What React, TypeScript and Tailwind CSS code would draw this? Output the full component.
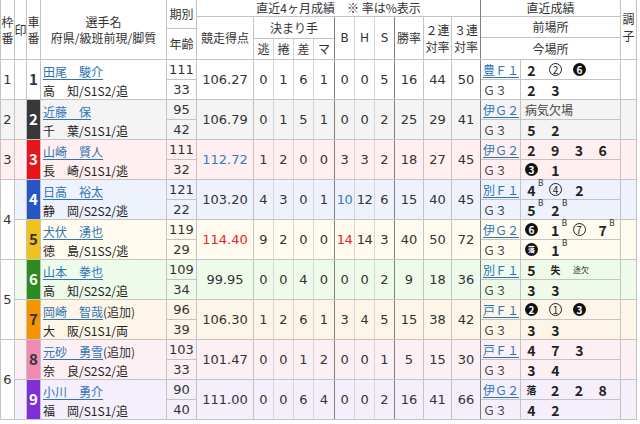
import React from "react";

type Res =
  | { t: "n"; v: string; b?: boolean }
  | { t: "o"; v: string }
  | { t: "f"; v: string; small?: boolean }
  | { t: "txt"; v: string }
  | { t: "s"; v: string; size: "a" | "b" };

type Row = {
  car: string;
  carCls: string;
  bg: string;
  name: string;
  extra?: string;
  pref: string;
  ki: string;
  age: string;
  score: string;
  scoreCls: string;
  k: string[];
  bhs: string[];
  bCls: string;
  rates: string[];
  prev: string;
  r1: Res[];
  r2: Res[];
};

const rows: Row[] = [
  {
    car: "1", carCls: "bg-white text-[#333]", bg: "bg-white",
    name: "田尾　駿介", pref: "高　知/S1S2/追", ki: "111", age: "33",
    score: "106.27", scoreCls: "text-[#333]", k: ["0", "1", "6", "1"], bhs: ["0", "0", "5"], bCls: "text-[#333]",
    rates: ["16", "44", "50"], prev: "豊Ｆ１",
    r1: [{ t: "n", v: "2" }, { t: "o", v: "2" }, { t: "f", v: "6" }],
    r2: [{ t: "n", v: "2" }, { t: "n", v: "3" }],
  },
  {
    car: "2", carCls: "bg-[#383838] text-white", bg: "bg-[#f4f4f4]",
    name: "近藤　保", pref: "千　葉/S1S1/追", ki: "95", age: "42",
    score: "106.79", scoreCls: "text-[#333]", k: ["0", "1", "5", "1"], bhs: ["0", "0", "2"], bCls: "text-[#333]",
    rates: ["25", "29", "41"], prev: "伊Ｇ２",
    r1: [{ t: "txt", v: "病気欠場" }],
    r2: [{ t: "n", v: "5" }, { t: "n", v: "2" }],
  },
  {
    car: "3", carCls: "bg-[#e8141c] text-white", bg: "bg-[#ffeff0]",
    name: "山崎　賢人", pref: "長　崎/S1S1/逃", ki: "111", age: "32",
    score: "112.72", scoreCls: "text-[#2f7fbf]", k: ["1", "2", "0", "0"], bhs: ["3", "3", "2"], bCls: "text-[#333]",
    rates: ["18", "27", "45"], prev: "伊Ｇ２",
    r1: [{ t: "n", v: "2" }, { t: "n", v: "9" }, { t: "n", v: "3" }, { t: "n", v: "6" }],
    r2: [{ t: "f", v: "3" }, { t: "n", v: "1" }],
  },
  {
    car: "4", carCls: "bg-[#2457c5] text-white", bg: "bg-[#eef2fc]",
    name: "日高　裕太", pref: "静　岡/S2S2/逃", ki: "121", age: "22",
    score: "103.20", scoreCls: "text-[#333]", k: ["4", "3", "0", "1"], bhs: ["10", "12", "6"], bCls: "text-[#2f7fbf]",
    rates: ["15", "40", "45"], prev: "別Ｆ１",
    r1: [{ t: "n", v: "4", b: true }, { t: "o", v: "4" }, { t: "n", v: "2" }],
    r2: [{ t: "n", v: "5", b: true }, { t: "n", v: "2", b: true }],
  },
  {
    car: "5", carCls: "bg-[#f2c21c] text-[#333]", bg: "bg-[#fffbee]",
    name: "犬伏　湧也", pref: "徳　島/S1SS/逃", ki: "119", age: "29",
    score: "114.40", scoreCls: "text-[#e8242c]", k: ["9", "2", "0", "0"], bhs: ["14", "14", "3"], bCls: "text-[#e8242c]",
    rates: ["40", "50", "72"], prev: "伊Ｇ２",
    r1: [{ t: "f", v: "6" }, { t: "n", v: "1", b: true }, { t: "o", v: "7" }, { t: "n", v: "7", b: true }],
    r2: [{ t: "f", v: "落", small: true }, { t: "n", v: "1", b: true }],
  },
  {
    car: "6", carCls: "bg-[#2c8a1f] text-white", bg: "bg-[#eefbea]",
    name: "山本　拳也", pref: "高　知/S2S2/追", ki: "109", age: "34",
    score: "99.95", scoreCls: "text-[#333]", k: ["0", "0", "4", "0"], bhs: ["0", "0", "2"], bCls: "text-[#333]",
    rates: ["9", "18", "36"], prev: "別Ｆ１",
    r1: [{ t: "n", v: "5" }, { t: "s", v: "失", size: "a" }, { t: "s", v: "途欠", size: "b" }],
    r2: [{ t: "n", v: "3" }, { t: "n", v: "3" }],
  },
  {
    car: "7", carCls: "bg-[#f39400] text-[#333]", bg: "bg-[#fdf6e8]",
    name: "岡崎　智哉", extra: "(追加)", pref: "大　阪/S1S1/両", ki: "96", age: "39",
    score: "106.30", scoreCls: "text-[#333]", k: ["1", "2", "6", "1"], bhs: ["3", "4", "5"], bCls: "text-[#333]",
    rates: ["15", "38", "42"], prev: "戸Ｆ１",
    r1: [{ t: "f", v: "2" }, { t: "o", v: "1" }, { t: "f", v: "3" }],
    r2: [{ t: "n", v: "3" }, { t: "n", v: "3" }],
  },
  {
    car: "8", carCls: "bg-[#f08ab5] text-[#333]", bg: "bg-[#fdf0f5]",
    name: "元砂　勇雪", extra: "(追加)", pref: "奈　良/S2S2/追", ki: "103", age: "33",
    score: "101.47", scoreCls: "text-[#333]", k: ["0", "0", "1", "2"], bhs: ["0", "0", "1"], bCls: "text-[#333]",
    rates: ["5", "15", "30"], prev: "戸Ｆ１",
    r1: [{ t: "n", v: "4" }, { t: "n", v: "7" }, { t: "n", v: "3" }],
    r2: [{ t: "n", v: "3" }, { t: "n", v: "4" }],
  },
  {
    car: "9", carCls: "bg-[#7f2fd6] text-white", bg: "bg-[#f5effc]",
    name: "小川　勇介", pref: "福　岡/S1S1/追", ki: "90", age: "40",
    score: "111.00", scoreCls: "text-[#333]", k: ["0", "0", "6", "4"], bhs: ["0", "0", "2"], bCls: "text-[#333]",
    rates: ["16", "41", "66"], prev: "伊Ｇ２",
    r1: [{ t: "s", v: "落", size: "a" }, { t: "n", v: "2" }, { t: "n", v: "2" }, { t: "n", v: "8" }],
    r2: [{ t: "n", v: "4" }, { t: "n", v: "2" }],
  },
];

const waku = [
  { n: "1", h: "h-[40px]", bg: "bg-white" },
  { n: "2", h: "h-[40px]", bg: "bg-[#f4f4f4]" },
  { n: "3", h: "h-[40px]", bg: "bg-[#ffeff0]" },
  { n: "4", h: "h-[80px]", bg: "bg-white" },
  { n: "5", h: "h-[80px]", bg: "bg-white" },
  { n: "6", h: "h-[80px]", bg: "bg-white" },
];

const FONT = { fontFamily: '"DejaVu Sans", "Noto Sans CJK JP", sans-serif' };
const JP = { fontFamily: '"Noto Sans CJK JP", sans-serif' };

function ResItem({ it }: { it: Res }) {
  if (it.t === "txt") {
    return <span className="text-[12px] text-[#444] leading-none" style={JP}>{it.v}</span>;
  }
  let inner: React.ReactNode = null;
  if (it.t === "n") {
    inner = (
      <>
        <span className="inline-flex w-[13px] justify-center text-[14px] font-bold text-[#222] leading-none" style={JP}>{it.v}</span>
        {it.b && <span className="text-[8px] text-[#333] leading-none self-start -mt-[3px]">B</span>}
      </>
    );
  } else if (it.t === "o") {
    inner = (
      <span className="inline-flex w-[13px] h-[13px] items-center justify-center rounded-full border-[1.5px] border-[#222] text-[10px] text-[#222] leading-none" style={JP}>{it.v}</span>
    );
  } else if (it.t === "f") {
    inner = (
      <span className={"inline-flex w-[13px] h-[13px] items-center justify-center rounded-full bg-[#111] text-white leading-none font-bold " + (it.small ? "text-[7px]" : "text-[10px]")} style={JP}>{it.v}</span>
    );
  } else if (it.t === "s") {
    inner = (
      <span className={"inline-flex justify-center text-[#222] leading-none " + (it.size === "a" ? "w-[13px] text-[10px] font-bold" : "text-[8px]")} style={JP}>{it.v}</span>
    );
  }
  return <span className="w-[24px] flex items-center">{inner}</span>;
}

function Results({ items }: { items: Res[] }) {
  return <div className="flex items-center h-full pl-[4px]">{items.map((it, i) => <ResItem key={i} it={it} />)}</div>;
}

const L = "border-[#c4c4c4]";

export default function App() {
  return (
    <div className="w-[640px] h-[424px] bg-white text-[#333] overflow-hidden" style={FONT}>
      <div className={"w-[637px] border-l " + L}>
        {/* header */}
        <div className={"flex h-[60px] border-b text-[12px] " + L} style={JP}>
          <div className={"w-[14px] border-r flex flex-col items-center justify-center leading-[16px] " + L}>
            <span>枠</span><span>番</span>
          </div>
          <div className={"w-[12px] border-r flex items-center justify-center " + L}>印</div>
          <div className={"w-[14px] border-r flex flex-col items-center justify-center leading-[16px] " + L}>
            <span>車</span><span>番</span>
          </div>
          <div className={"w-[126px] border-r flex flex-col items-center justify-center leading-[16px] " + L}>
            <span>選手名</span><span>府県/級班前現/脚質</span>
          </div>
          <div className={"w-[30px] border-r flex flex-col " + L}>
            <div className={"h-[29px] border-b flex items-center justify-center " + L}>期別</div>
            <div className="flex-1 flex items-center justify-center">年齢</div>
          </div>
          <div className="w-[284px] border-r border-[#808080] flex flex-col">
            <div className={"h-[17px] border-b flex items-center justify-center leading-none " + L}>直近4ヶ月成績　※ 率は%表示</div>
            <div className="flex flex-1">
              <div className={"w-[57px] border-r flex items-center justify-center " + L}>競走得点</div>
              <div className="w-[81px] border-r border-[#808080] flex flex-col">
                <div className={"h-[22px] border-b flex items-center justify-center " + L}>決まり手</div>
                <div className="flex flex-1">
                  <div className="w-[20px] border-r border-[#d6d6d6] flex items-center justify-center">逃</div>
                  <div className="w-[20px] border-r border-[#d6d6d6] flex items-center justify-center">捲</div>
                  <div className="w-[20px] border-r border-[#d6d6d6] flex items-center justify-center">差</div>
                  <div className="flex-1 flex items-center justify-center">マ</div>
                </div>
              </div>
              <div className="w-[20px] border-r border-[#d6d6d6] flex items-center justify-center" style={FONT}>B</div>
              <div className="w-[20px] border-r border-[#d6d6d6] flex items-center justify-center" style={FONT}>H</div>
              <div className="w-[20px] border-r border-[#808080] flex items-center justify-center" style={FONT}>S</div>
              <div className={"w-[29px] border-r flex items-center justify-center " + L}>勝率</div>
              <div className={"w-[28px] border-r flex flex-col items-center justify-center leading-[17px] " + L}>
                <span>２連</span><span>対率</span>
              </div>
              <div className="flex-1 flex flex-col items-center justify-center leading-[17px]">
                <span>３連</span><span>対率</span>
              </div>
            </div>
          </div>
          <div className={"w-[140px] border-r flex flex-col " + L}>
            <div className={"h-[17px] border-b flex items-center justify-center leading-none " + L}>直近成績</div>
            <div className={"h-[21px] border-b flex items-center justify-center " + L}>前場所</div>
            <div className="flex-1 flex items-center justify-center">今場所</div>
          </div>
          <div className={"flex-1 border-r flex flex-col items-center justify-center text-[12px] leading-[17px] pb-[6px] " + L}>
            <span className="block">調</span>
            <span className="block">子</span>
          </div>
        </div>
        {/* body */}
        <div className="flex">
          <div className="w-[14px] flex flex-col">
            {waku.map((w) => (
              <div key={w.n} className={"border-r border-b flex items-center justify-center text-[13px] " + L + " " + w.h + " " + w.bg}>
                {w.n}
              </div>
            ))}
          </div>
          <div className="flex-1 flex flex-col">
            {rows.map((r) => (
              <div key={r.car} className={"flex h-[40px] border-b text-[13px] " + L + " " + r.bg}>
                <div className={"w-[12px] border-r " + L}></div>
                <div className={"w-[14px] border-r flex items-center justify-center text-[15px] font-bold " + L + " " + r.carCls} style={JP}>{r.car}</div>
                <div className={"w-[126px] border-r flex flex-col justify-center pl-[2px] pt-[2px] text-[12px] leading-[19px] " + L} style={JP}>
                  <div className="whitespace-nowrap">
                    <span className="text-[#2f75b5] underline underline-offset-2">{r.name}</span>
                    {r.extra && <span className="text-[#333]">{r.extra}</span>}
                  </div>
                  <div className="whitespace-nowrap text-[#222]">{r.pref}</div>
                </div>
                <div className={"w-[30px] border-r flex flex-col " + L}>
                  <div className={"h-[20px] border-b flex items-center justify-center " + L}>{r.ki}</div>
                  <div className="flex-1 flex items-center justify-center">{r.age}</div>
                </div>
                <div className={"w-[57px] border-r flex items-center justify-center " + L + " " + r.scoreCls}>{r.score}</div>
                <div className="w-[20px] border-r border-[#d6d6d6] flex items-center justify-center">{r.k[0]}</div>
                <div className="w-[20px] border-r border-[#d6d6d6] flex items-center justify-center">{r.k[1]}</div>
                <div className="w-[20px] border-r border-[#d6d6d6] flex items-center justify-center">{r.k[2]}</div>
                <div className="w-[21px] border-r border-[#808080] flex items-center justify-center">{r.k[3]}</div>
                <div className={"w-[20px] border-r border-[#d6d6d6] flex items-center justify-center tracking-[-0.5px] " + r.bCls}>{r.bhs[0]}</div>
                <div className="w-[20px] border-r border-[#d6d6d6] flex items-center justify-center tracking-[-0.5px]">{r.bhs[1]}</div>
                <div className="w-[20px] border-r border-[#808080] flex items-center justify-center">{r.bhs[2]}</div>
                <div className={"w-[29px] border-r flex items-center justify-center " + L}>{r.rates[0]}</div>
                <div className={"w-[28px] border-r flex items-center justify-center " + L}>{r.rates[1]}</div>
                <div className="w-[29px] border-r border-[#808080] flex items-center justify-center">{r.rates[2]}</div>
                <div className={"w-[40px] border-r flex flex-col text-[12px] " + L} style={JP}>
                  <div className={"h-[20px] border-b flex items-center pl-[2px] " + L}>
                    <span className="text-[#2f75b5] underline underline-offset-2 leading-none">{r.prev}</span>
                  </div>
                  <div className="flex-1 flex items-center pl-[2px] text-[#444]">Ｇ３</div>
                </div>
                <div className={"w-[100px] border-r flex flex-col " + L}>
                  <div className={"h-[20px] border-b " + L}><Results items={r.r1} /></div>
                  <div className="flex-1"><Results items={r.r2} /></div>
                </div>
                <div className={"flex-1 border-r " + L}></div>
              </div>
            ))}
          </div>
        </div>
      </div>
    </div>
  );
}
